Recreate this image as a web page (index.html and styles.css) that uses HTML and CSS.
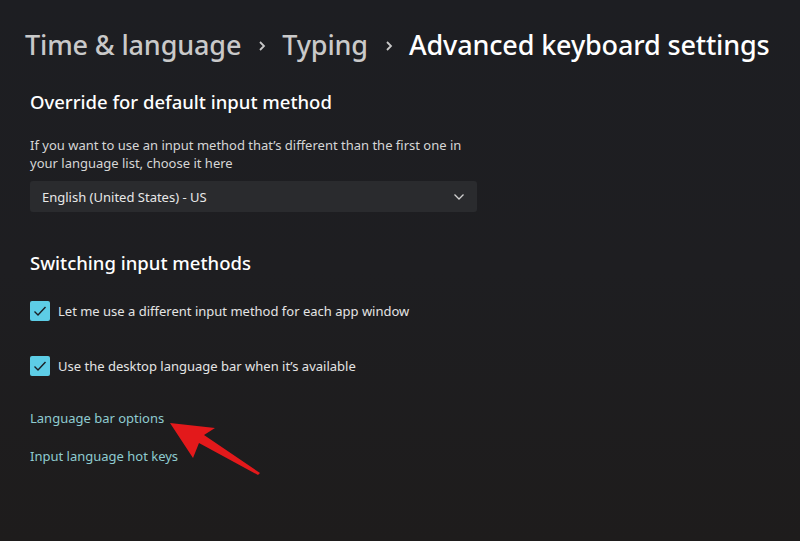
FILE: index.html
```html
<!DOCTYPE html>
<html lang="en">
<head>
    <meta charset="UTF-8">
    <title>Advanced keyboard settings</title>
    <link rel="stylesheet" href="styles.css">
</head>
<body>
    <div class="breadcrumb">
        <span class="crumb">Time &amp; language</span>
        <svg class="sep" width="10" height="12" viewBox="0 0 10 12"><path d="M3 2 L7 6 L3 10" fill="none" stroke="#c8c8c8" stroke-width="1.8"/></svg>
        <span class="crumb">Typing</span>
        <svg class="sep" width="10" height="12" viewBox="0 0 10 12"><path d="M3 2 L7 6 L3 10" fill="none" stroke="#c8c8c8" stroke-width="1.8"/></svg>
        <span class="crumb current">Advanced keyboard settings</span>
    </div>

    <div class="content">
        <h2>Override for default input method</h2>
        <p class="desc">If you want to use an input method that’s different than the first one in your language list, choose it here</p>
        <div class="dropdown">
            <span>English (United States) - US</span>
            <svg width="12" height="8" viewBox="0 0 12 8"><path d="M1.5 1.5 L6 6 L10.5 1.5" fill="none" stroke="#d0d0d0" stroke-width="1.3"/></svg>
        </div>

        <h2 class="second">Switching input methods</h2>
        <div class="check-row">
            <span class="box"><svg width="14" height="12" viewBox="0 0 14 12"><path d="M1.5 6.5 L5 10 L12.5 2" fill="none" stroke="#1b1f24" stroke-width="1.4"/></svg></span>
            <span>Let me use a different input method for each app window</span>
        </div>
        <div class="check-row">
            <span class="box"><svg width="14" height="12" viewBox="0 0 14 12"><path d="M1.5 6.5 L5 10 L12.5 2" fill="none" stroke="#1b1f24" stroke-width="1.4"/></svg></span>
            <span>Use the desktop language bar when it’s available</span>
        </div>

        <a class="link first-link">Language bar options</a>
        <a class="link">Input language hot keys</a>
    </div>

    <svg class="arrow" width="100" height="60" viewBox="0 0 100 60">
        <polygon points="0,23 45,28 34,35 90,73 88,75 29,43 23,58" fill="#e3191b"/>
    </svg>
</body>
</html>
```

FILE: styles.css
```css
body {
    margin: 0;
    width: 800px;
    height: 541px;
    overflow: hidden;
    background: linear-gradient(180deg, #1d1e22 0%, #1e1e21 50%, #1e1c1c 100%);
    font-family: "Noto Sans", "Open Sans", sans-serif;
    color: #ffffff;
    position: relative;
}
.breadcrumb {
    display: flex;
    align-items: center;
    padding: 24px 0 0 25px;
    height: 40px;
    font-size: 27px;
    font-weight: 500;
    letter-spacing: -0.15px;
}
.crumb {
    color: #c9c9c9;
}
.crumb.current {
    color: #ffffff;
}
.sep {
    margin: 4px 15px 0 16px;
}
.content {
    padding: 0 0 0 30px;
    display: flex;
    flex-direction: column;
    align-items: flex-start;
}
h2 {
    margin: 23px 0 0 0;
    font-size: 18.5px;
    font-weight: 500;
    line-height: 30px;
}
h2.second {
    margin-top: 36px;
}
.desc {
    margin: 19px 0 0 0;
    width: 450px;
    font-size: 13px;
    line-height: 18px;
    color: #d6d6d6;
}
.dropdown {
    margin-top: 9px;
    width: 423px;
    height: 31px;
    padding: 0 12px;
    background: #2a2b2e;
    border-radius: 3px;
    display: flex;
    align-items: center;
    justify-content: space-between;
    font-size: 13px;
    color: #e8e8e8;
}
.check-row {
    display: flex;
    align-items: center;
    gap: 8px;
    margin-top: 23px;
    font-size: 13px;
    color: #e4e4e4;
}
.check-row + .check-row {
    margin-top: 35px;
}
.box {
    width: 20px;
    height: 20px;
    border-radius: 2px;
    background: #5dcde6;
    display: flex;
    align-items: center;
    justify-content: center;
}
.link {
    font-size: 13px;
    line-height: 20px;
    color: #8fcbd0;
    margin-top: 18px;
}
.first-link {
    margin-top: 32px;
}
.arrow {
    position: absolute;
    left: 170px;
    top: 400px;
    overflow: visible;
}
```
